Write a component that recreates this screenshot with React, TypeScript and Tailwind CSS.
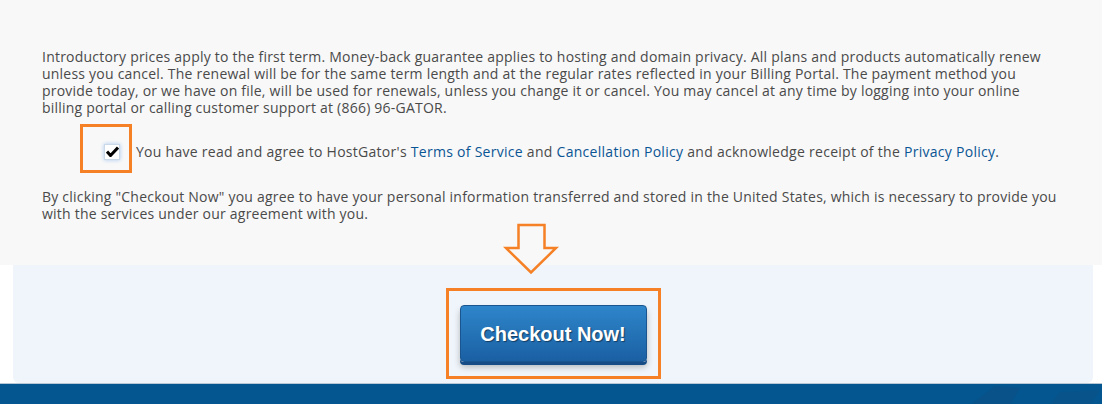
import React from "react";

export default function App() {
  return (
    <div className="w-[1102px] h-[404px] overflow-hidden bg-white flex flex-col" style={{ fontFamily: '"Open Sans", "Liberation Sans", sans-serif' }}>
      <div className="bg-[#f8f8f8] h-[265px] shrink-0 pl-[42px] pr-[44px] pt-[48px] text-[14px] leading-[17px] tracking-[0.22px] text-[#4a4a4a] relative z-10">
        <p>
          Introductory prices apply to the first term. Money-back guarantee applies to hosting and domain privacy. All plans and products automatically renew unless you cancel. The renewal will be for the same term length and at the regular rates reflected in your Billing Portal. The payment method you provide today, or we have on file, will be used for renewals, unless you change it or cancel. You may cancel at any time by logging into your online billing portal or calling customer support at (866) 96-GATOR.
        </p>
        <div className="flex items-start mt-[8px] ml-[38px] h-[49px]">
          <div className="w-[52px] h-[49px] border-[3px] border-[#f58025] flex items-center justify-center pl-[12px] pt-[6px]">
            <div className="w-[16px] h-[16px] bg-white border border-[#c9d9ea] shadow-[0_0_4px_#a8c8ee] flex items-center justify-center">
              <svg width="13" height="11" viewBox="0 0 13 11">
                <path d="M1 5.5 L4.5 9.5 L12 1.5" stroke="#000" strokeWidth="3" fill="none" />
              </svg>
            </div>
          </div>
          <span className="ml-[4px] mt-[19px] tracking-[0.28px]">
            You have read and agree to HostGator's <span className="text-[#0a5594]">Terms of Service</span> and <span className="text-[#0a5594]">Cancellation Policy</span> and acknowledge receipt of the <span className="text-[#0a5594]">Privacy Policy</span>.
          </span>
        </div>
        <p className="mt-[15px]">
          By clicking "Checkout Now" you agree to have your personal information transferred and stored in the United States, which is necessary to provide you with the services under our agreement with you.
        </p>
        <svg className="absolute left-[503px] top-[223px]" width="56" height="52" viewBox="0 0 56 52">
          <path d="M15.5 2 H41.5 V25 H53 L28 49.5 L3 25 H15.5 Z" fill="none" stroke="#f58025" strokeWidth="2.5" strokeLinejoin="miter" />
        </svg>
      </div>
      <div className="flex h-[118px] shrink-0">
        <div className="w-[13px] bg-white" />
        <div className="flex-1 bg-[#eff5fa] rounded-b-[6px] flex justify-center pt-[23px]">
          <div className="w-[215px] h-[91px] border-[3px] border-[#f58025] flex items-center justify-center">
            <div
              className="w-[187px] h-[57px] rounded-[4px] bg-gradient-to-b from-[#2f86cb] to-[#1a60a3] border border-[#1b5590] shadow-[0_3px_0_#174d86,0_5px_6px_rgba(0,0,0,0.25)] flex items-center justify-center text-white font-bold text-[20px]"
              style={{ fontFamily: '"Liberation Sans", Arial, sans-serif', textShadow: "1px 1px 1px rgba(0,0,0,0.45)" }}
            >
              Checkout Now!
            </div>
          </div>
        </div>
        <div className="w-[9px] bg-white" />
      </div>
      <div className="h-[1px] bg-[#b7c7d6] shrink-0" />
      <div className="flex-1 bg-[#03568f] relative overflow-hidden">
        <svg className="absolute left-[950px] top-0" width="152" height="21" viewBox="0 0 152 21">
          <path d="M20 21 L45 2 L70 4 L60 21 Z" fill="#0d4f86" opacity="0.6" />
          <path d="M100 21 L110 8 L150 6 L140 21 Z" fill="#0d4f86" opacity="0.5" />
        </svg>
      </div>
    </div>
  );
}
